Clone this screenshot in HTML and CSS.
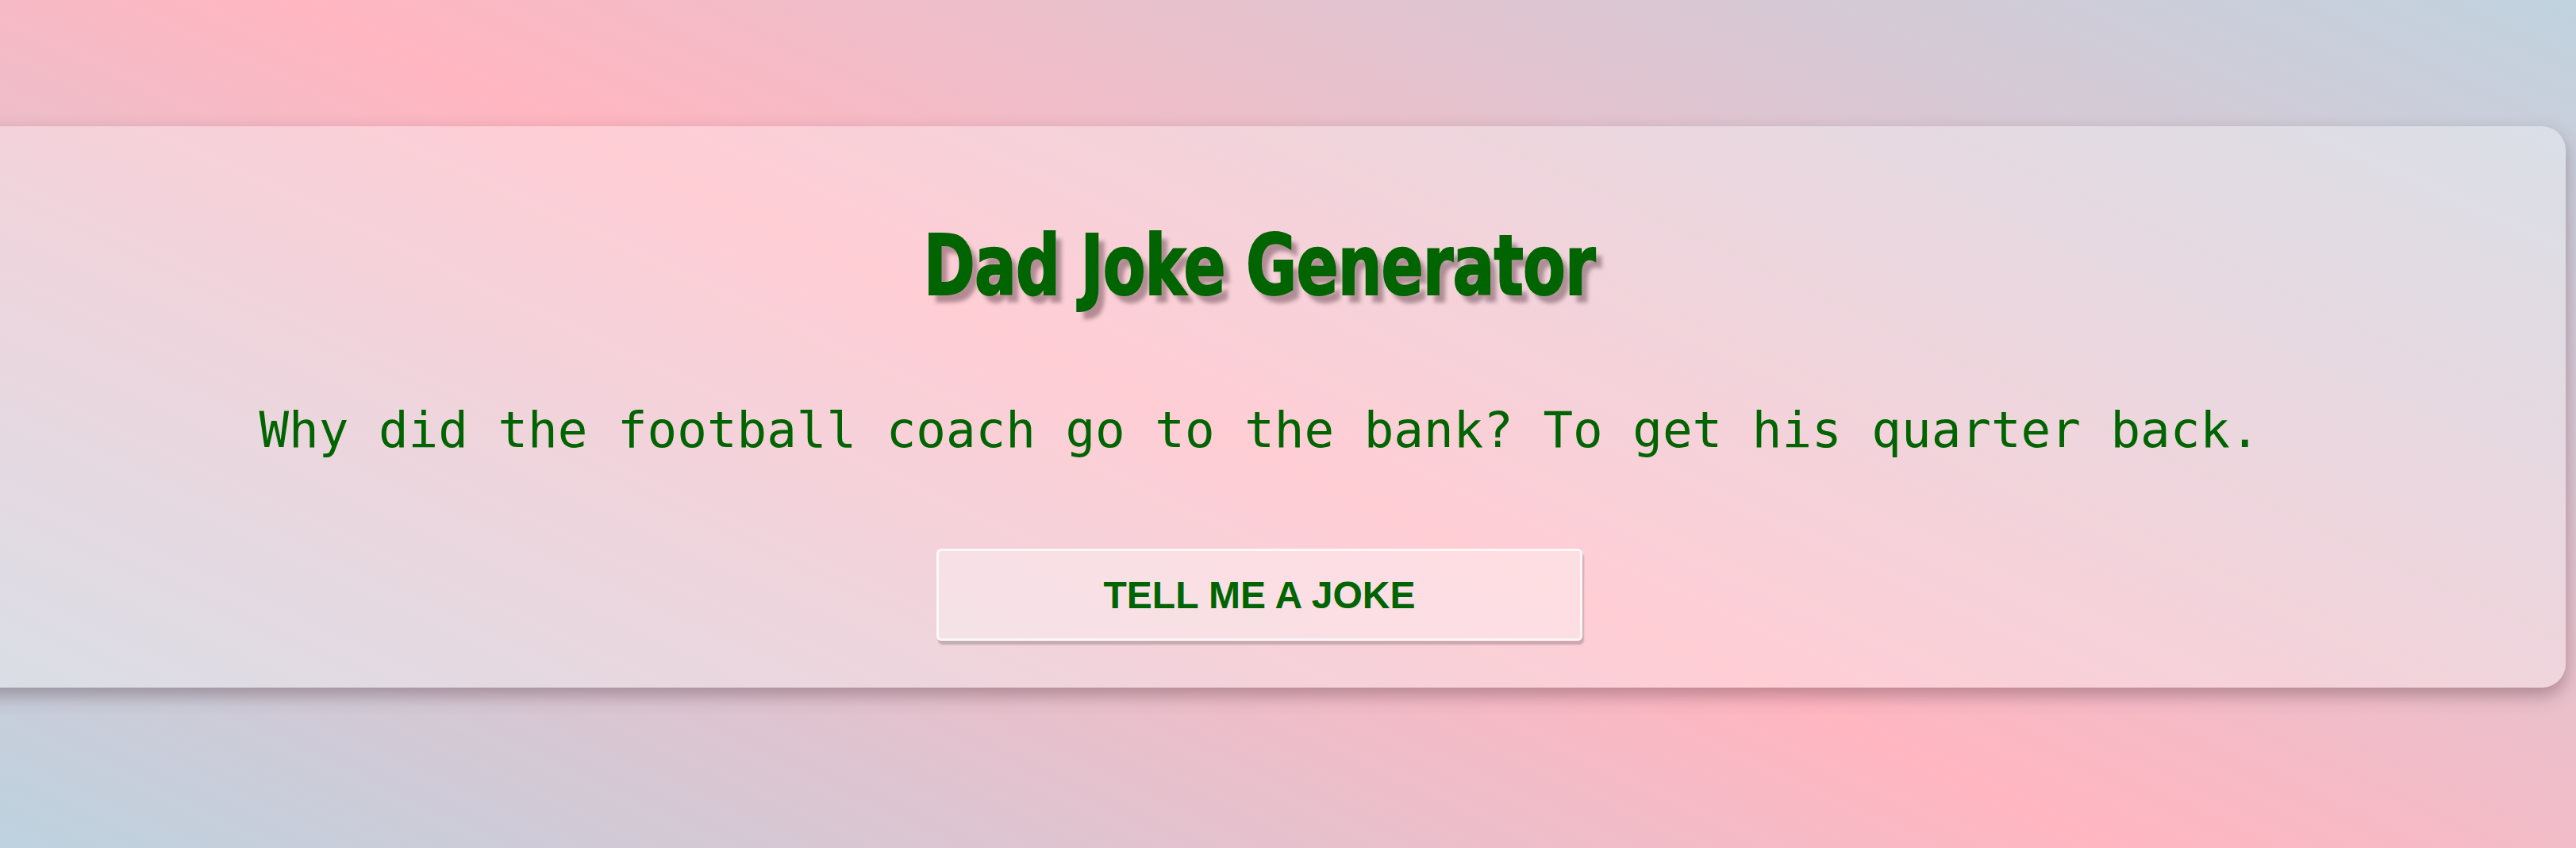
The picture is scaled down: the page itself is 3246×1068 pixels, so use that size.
FILE: index.html
```html
<!DOCTYPE html>
<html lang="en">
<head>
<meta charset="utf-8">
<title>Dad Joke Generator</title>
<link rel="stylesheet" href="styles.css">
</head>
<body>
<main class="page">
  <section class="card">
    <h1 class="title">Dad Joke Generator</h1>
    <p class="joke">Why did the football coach go to the bank? To get his quarter back.</p>
    <button class="btn" type="button">TELL ME A JOKE</button>
  </section>
</main>
</body>
</html>
```

FILE: styles.css
```css
html, body {
  margin: 0;
  padding: 0;
}

body {
  min-height: 100vh;
  overflow: hidden;
  background: linear-gradient(25deg, #bdd2df 0%, #ffb6c1 48%, #c0d3df 100%);
  font-family: "Liberation Sans", Arial, sans-serif;
}

.page {
  padding-top: 159px;
}

.card {
  box-sizing: border-box;
  width: 3292px;
  height: 707px;
  margin-left: -59px;
  padding-top: 123px;
  border-radius: 30px;
  background: rgba(255, 255, 255, 0.33);
  box-shadow: 0 10px 22px rgba(60, 30, 40, 0.34);
  display: flex;
  flex-direction: column;
  align-items: center;
}

.title {
  display: inline-block;
  margin: 0;
  font-family: Impact, "Liberation Sans Narrow", "DejaVu Sans Condensed", sans-serif;
  font-weight: bold;
  font-size: 106px;
  line-height: 106px;
  letter-spacing: -1px;
  color: #006400;
  -webkit-text-stroke: 2px #006400;
  text-shadow: 10px 10px 6px rgba(70, 40, 50, 0.4);
  transform: scaleX(0.82);
  transform-origin: center;
}

.joke {
  margin: 116px 0 0;
  font-family: "DejaVu Sans Mono", monospace;
  font-size: 62.5px;
  line-height: 75px;
  color: #006400;
  white-space: nowrap;
}

.btn {
  box-sizing: border-box;
  margin-top: 112px;
  width: 814px;
  height: 116px;
  border: 3px solid rgba(255, 255, 255, 0.75);
  border-radius: 6px;
  background: rgba(255, 255, 255, 0.32);
  box-shadow: 2px 5px 2px rgba(0, 0, 0, 0.18);
  font-family: "Liberation Sans", Arial, sans-serif;
  font-weight: bold;
  font-size: 48px;
  color: #006400;
  cursor: pointer;
  padding: 0;
}
```
